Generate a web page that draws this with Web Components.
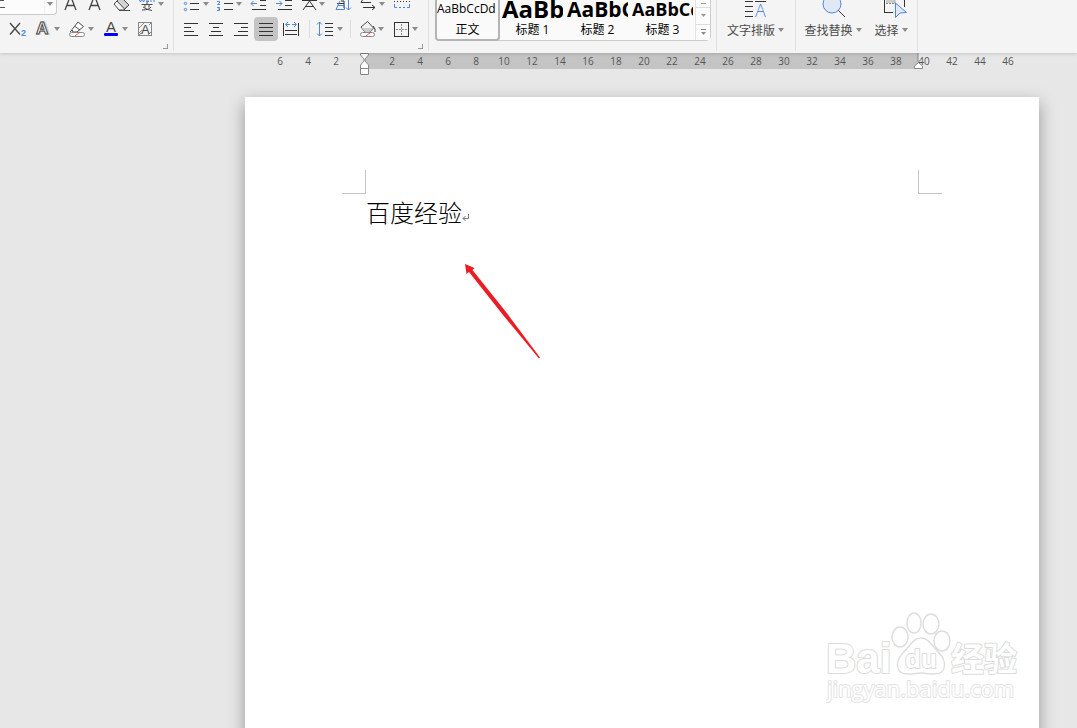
<!DOCTYPE html>
<html lang="zh-CN">
<head>
<meta charset="utf-8">
<title>文档编辑</title>
<style>
html, body { margin: 0; height: 100%; }
body { font-family: "Open Sans", "Noto Sans CJK SC", sans-serif; font-size: 12px; color: #4a4a4a; --page-left: 245px; --unit: 28px; }
</style>
</head>
<body>
<writer-app></writer-app>
<script>
const ICONS = {
  grow: [20, 17, '<path d="M4 10 9-3H10L15 10M6 5.500H13" fill="none" stroke="#444" stroke-width="1.300"/>'],
  shrink: [20, 17, '<path d="M4 10 9-3H10L15 10M6 5.500H13" fill="none" stroke="#444" stroke-width="1.300"/>'],
  eraser: [24, 17, '<path d="M5 4 12-3 20 5 15 10H10Z" fill="#f4f4f4" class="d"/><path d="M8 1 12-3 20 5 15.500 9Z" fill="#d2d2d2" class="d"/><path class="d" d="M10 10.500H21"/>'],
  wen: [20, 17, '<path d="M2-1 3.500 2 5-1 6.500 2 8-1M9 0H12M9 1.500H12M14 2V-1H17V2" fill="none" stroke="#4f86dc"/><path class="d" d="M10 2V5M4.500 4.500H15.500M8 5V7.500M12 5V7.500M5 10Q12 10 14 7M6 7Q10 10 15 10.500"/>'],
  subscript: [20, 24, '<path d="M3 6 13 17.500M13 6 3 17.500" fill="none" stroke="#444" stroke-width="1.300"/><text x="14" y="19" font-size="9" font-weight="600" fill="#4f86dc">2</text>'],
  effect: [20, 24, '<text x="4" y="17" font-size="17" font-weight="600" fill="#d8d8d8" stroke="#d8d8d8" stroke-width="2">A</text><text x="3" y="17" font-size="17" font-weight="600" fill="#fff" stroke="#444" stroke-width="1">A</text>'],
  highlight: [20, 24, '<path class="d" fill="#fff" d="M5 12.500 11 5 16.500 9.500 10 15H6ZM8 9.500 13 13M5 13 3 15"/><rect x="2.500" y="15.500" width="15" height="4" rx="2" fill="#fff" class="s"/><path d="M8 19 13 15" stroke="#e05050" fill="none"/>'],
  color: [20, 24, '<text class="a" x="5" y="15" font-size="15">A</text><rect x="3" y="16" width="14" height="3" rx="1" fill="#00f"/>'],
  shade: [20, 24, '<rect x="3.500" y="5.500" width="13" height="13" fill="#f4f4f4" class="s"/><path d="M4 11 9 6M4 16 7 13M13 18 16 15M14 8 16 6M4 18 6 16" stroke="#888" fill="none"/><text class="a" x="6" y="17" font-size="13">A</text>'],
  bullets: [20, 17, '<path class="k" d="M8 3.500H17M8 9.500H17"/><circle cx="3.500" cy="3.500" r="1.200" class="b"/><circle cx="3.500" cy="9.500" r="1.200" class="b"/>'],
  numbers: [20, 17, '<path class="k" d="M9 3.500H18M9 9.500H18"/><path class="b" d="M2 1.500H4.500V3L2.500 4.500H5M2 7.500H4.500V10.500H2M3 9H4.500"/>'],
  outdent: [20, 17, '<path class="k" d="M12 .5H18M12 5.500H18M4 9.500H18"/><path class="b" d="M3 3.500H9M5.500 1 3 3.500 5.500 6"/>'],
  indent: [20, 17, '<path class="k" d="M12 .5H19M12 5.500H19M5 9.500H19"/><path class="b" d="M3 3.500H9M6.500 1 9 3.500 6.500 6"/>'],
  scale: [20, 17, '<path class="k" d="M4 .5H19M11.500 1 5 10M11.500 1 18 10M8 6.500H15"/>'],
  sort: [22, 17, '<path class="k" d="M10 1H13V8M6 3.500H13"/><path class="b" d="M9 1 5 9.500H13.500V5.500H7M17.500-2V10M15 7.500 17.500 10 20 7.500"/>'],
  tabs: [20, 17, '<path class="k" d="M3 2.500H13M3 2.500 5-1M5 7.500H17M14 5 17 7.500 14 10"/>'],
  marks: [20, 17, '<path class="k" stroke-dasharray="1 2" d="M3 1.500H19"/><path class="b" d="M3.500 4V7.500H6M8 7.500H10M12 7.500H14M16 7.500H18.500V4"/>'],
  left: [24, 24, '<path class="k" d="M5 6.500H19M5 10.500H12M5 14.500H15M5 18.500H19"/>'],
  center: [24, 24, '<path class="k" d="M5 6.500H19M9 10.500H15M7 14.500H17M5 18.500H19"/>'],
  right: [24, 24, '<path class="k" d="M5 6.500H19M12 10.500H19M9 14.500H19M5 18.500H19"/>'],
  justify: [24, 24, '<path class="k" d="M5 6.500H19M5 10.500H19M5 14.500H19M5 18.500H19"/>'],
  distribute: [24, 24, '<path class="k" d="M4.500 6V19M19.500 6V19M6 13.500H18M6 17.500H18"/><path class="b" d="M7 7.500H11M9 5 6.500 7.500 9 10M13 7.500H17M15 5 17.500 7.500 15 10"/>'],
  spacing: [20, 24, '<path class="k" d="M9 6.500H17M9 10.500H17M9 14.500H17M9 18.500H17"/><path class="b" d="M3.500 5V19M1 7.500 3.500 5 6 7.500M1 16.500 3.500 19 6 16.500"/>'],
  bucket: [20, 24, '<path class="d" fill="#f4f4f4" d="M4 10 10.500 4.500 16.500 11 13 15H8Z"/><path d="M5 11H16L13 15H8Z" fill="#ccc"/><path class="k" d="M16 9 18 12V15"/><rect x="3.500" y="15.500" width="14" height="4" rx="2" fill="#fff" class="s"/><path d="M9 19 14 15" stroke="#e05050" fill="none"/>'],
  border: [20, 24, '<rect class="k" x="3.500" y="5.500" width="14" height="14"/><path d="M10.500 7V18M5 12.500H16" stroke="#888" fill="none" stroke-dasharray="2 1"/>'],
  layout: [32, 20, '<path class="k" d="M5 1.500H13M15 1.500H26M5 6.500H13M5 11.500H13M5 16.500H13"/><text x="15" y="17" font-size="18" font-weight="300" fill="#4f86dc">A</text>'],
  find: [32, 20, '<path class="k" d="M21 10 28 17"/><circle cx="15" cy="4" r="9" class="b" style="fill:#e1e8f5"/>'],
  select: [32, 20, '<path class="k" d="M8.500 0V13M8 12.500H17M28.500 0V7"/><path d="M10 0H19V3H10Z" fill="#ccc"/><path d="M10 3.500H19V0" fill="none" stroke="#888" stroke-dasharray="2 1"/><path class="b" style="fill:#e1e8f5" d="M19.500 3 30.500 12.500 24 13 19.500 17.500Z"/>']
};
const CARET = '<svg class="caret" width="8" height="4" viewBox="0 0 8 4" aria-hidden="true"><path d="M1 0H7L4 4Z" fill="#8c8c8c"/></svg>';
const ICON_CSS = `
  svg { display: block; flex: none; overflow: hidden; }
  .k { fill: none; stroke: #333; } .d { stroke: #4a4a4a; } .d:not([fill]) { fill: none; }
  .s { stroke: #888; } .b { fill: none; stroke: #4f86dc; } .a { fill: #4a4a4a; }`;
const drawIcon = n => { const [w, h, m] = ICONS[n]; return `<svg width="${w}" height="${h}" viewBox="0 0 ${w} ${h}" aria-hidden="true">${m}</svg>`; };

function define(name, render) {
  customElements.define(name, class extends HTMLElement {
    connectedCallback() {
      if (!this.shadowRoot) this.attachShadow({ mode: 'open' }).innerHTML = render(this);
    }
  });
}

define('tool-button', el => `<style>${ICON_CSS}
  :host { display: block; flex: none; }
  button { display: flex; align-items: center; padding: 0; border: 0; border-radius: 4px; background: none; }
  :host([pressed]) button { background: #c4c4c4; }
  :host([top]) .caret { align-self: flex-start; margin-top: 2px; }
</style><button type="button" aria-label="${el.getAttribute('label')}">${drawIcon(el.getAttribute('icon'))}${el.hasAttribute('caret') ? CARET : ''}</button>`);

define('large-button', el => `<style>${ICON_CSS}
  :host { display: block; flex: none; }
  button { display: flex; flex-direction: column; align-items: center; padding: 0; border: 0; background: none; font: inherit; color: #4a4a4a; }
  span { display: flex; align-items: center; gap: 2px; height: 20px; white-space: nowrap; }
</style><button type="button">${drawIcon(el.getAttribute('icon'))}<span><slot></slot>${CARET}</span></button>`);

define('ribbon-group', el => `<style>
  :host { display: flex; flex-direction: column; box-sizing: border-box; flex: none; height: 51px; border-right: 1px solid #e0e0e0; }
  ::slotted([slot=top]) { display: flex; height: 17px; }
  ::slotted([slot=main]) { display: flex; height: 24px; }
  button { display: block; width: 5px; height: 5px; margin: 3px 5px 0 auto; padding: 0; border: 0 solid #999; border-width: 0 1px 1px 0; background: none; }
</style><slot name="top"></slot><slot name="main"></slot><slot></slot>${el.hasAttribute('launcher') ? `<button type="button" aria-label="${el.getAttribute('launcher')}"></button>` : ''}`);

define('font-box', () => `<style>
  :host { display: grid; flex: none; width: 57px; height: 15px; }
  select, svg { grid-area: 1 / 1; }
  select { appearance: none; width: 57px; height: 15px; margin: 0; border: 1px solid #ccc; border-width: 0 1px 1px 0; border-radius: 0 0 4px 0; background: #fcfcfc; }
  svg { pointer-events: none; }
</style><select aria-label="字号"><option></option></select>
<svg width="57" height="15" viewBox="0 0 57 15"><path d="M0 .5H4M0 7.500H5" stroke="#555"/><path d="M44.500 0V14" stroke="#f0f0f0"/><path d="M47 2H53L50 6Z" fill="#8c8c8c"/></svg>`);

define('style-card', el => `<style>
  :host { display: block; flex: none; width: 65px; }
  button { display: flex; flex-direction: column; align-items: center; box-sizing: border-box; width: 65px; height: 41px; padding: 0 2px; border: 0; background: none; font: inherit; color: #000; overflow: hidden; }
  :host([selected]) button { border: 2px solid #b4b4b4; border-top: 0; border-radius: 0 0 4px 4px; padding: 0; }
  .preview { width: 100%; height: 21px; line-height: 18px; white-space: nowrap; overflow: hidden; text-align: left; font-size: var(--size, 12px); font-weight: var(--weight, 400); }
  .name { line-height: 18px; }
</style><button type="button"><span class="preview">${el.getAttribute('sample')}</span><span class="name"><slot></slot></span></button>`);

define('style-gallery', () => `<style>
  :host { display: flex; box-sizing: border-box; height: 41px; margin: 0 5px 0 6px; border: 1px solid #ccc; border-top: 0; border-left: 0; border-radius: 0 0 5px 5px; background: #fafafa; }
  .h1 { --size: 24px; --weight: 700; } .h2 { --size: 21px; --weight: 700; } .h3 { --size: 18px; --weight: 700; }
  nav { display: flex; flex-direction: column; width: 15px; border-left: 1px solid #e2e2e2; }
  button { display: grid; place-items: center; height: 17px; padding: 0; border: 0; border-bottom: 1px solid #ddd; background: #fcfcfc; }
  button:first-child { height: 8px; } button:last-child { height: 15px; border: 0; }
  svg { display: block; }
</style>
<style-card selected sample="AaBbCcDd">正文</style-card>
<style-card class="h1" sample="AaBb">标题 1</style-card>
<style-card class="h2" sample="AaBbC">标题 2</style-card>
<style-card class="h3" sample="AaBbCc">标题 3</style-card>
<nav><button type="button" aria-label="向上"><svg width="7" height="2"><path d="M1 .5H6" stroke="#999"/></svg></button>
<button type="button" aria-label="向下"><svg width="7" height="4"><path d="M1 0H6L3.500 3Z" fill="#999"/></svg></button>
<button type="button" aria-label="更多"><svg width="7" height="7"><path d="M1 .5H6" stroke="#888"/><path d="M1 3H6L3.500 6Z" fill="#888"/></svg></button></nav>`);

define('app-ribbon', () => `<style>
  :host { display: flex; flex: none; height: 53px; background: #f4f4f4; overflow: hidden; position: relative; z-index: 2; box-shadow: 0 1px 3px rgba(0,0,0,.15); }
  .font { width: 174px; } .para { width: 255px; } .styles { width: 288px; } .text { width: 79px; } .edit { width: 122px; }
  .font [slot=top] { gap: 4px; } .font [slot=main] { gap: 6px; padding-left: 7px; }
  .para [slot=top] { gap: 5px; padding-left: 8px; } .para [slot=main] { padding-left: 5px; }
  .row { display: flex; gap: 1px; } .wide { display: flex; gap: 6px; }
  i { width: 1px; height: 18px; margin: 3px 6px; background: #ddd; }
  .large { display: flex; justify-content: center; gap: 12px; }
</style>
<ribbon-group class="font" launcher="字体设置">
  <div slot="top"><font-box></font-box><tool-button icon="grow" label="增大字号"></tool-button><tool-button icon="shrink" label="减小字号"></tool-button><tool-button icon="eraser" label="清除格式"></tool-button><tool-button top caret icon="wen" label="拼音指南"></tool-button></div>
  <div slot="main"><tool-button icon="subscript" label="下标"></tool-button><tool-button caret icon="effect" label="文字效果"></tool-button><tool-button caret icon="highlight" label="突出显示"></tool-button><tool-button caret icon="color" label="字体颜色"></tool-button><tool-button icon="shade" label="字符底纹"></tool-button></div>
</ribbon-group>
<ribbon-group class="para" launcher="段落设置">
  <div slot="top"><tool-button top caret icon="bullets" label="项目符号"></tool-button><tool-button top caret icon="numbers" label="编号"></tool-button><tool-button icon="outdent" label="减少缩进量"></tool-button><tool-button icon="indent" label="增加缩进量"></tool-button><tool-button top caret icon="scale" label="中文版式"></tool-button><tool-button icon="sort" label="排序"></tool-button><tool-button top caret icon="tabs" label="制表位"></tool-button><tool-button icon="marks" label="标尺"></tool-button></div>
  <div slot="main"><div class="row"><tool-button icon="left" label="左对齐"></tool-button><tool-button icon="center" label="居中"></tool-button><tool-button icon="right" label="右对齐"></tool-button><tool-button pressed icon="justify" label="两端对齐"></tool-button><tool-button icon="distribute" label="分散对齐"></tool-button></div><i></i><tool-button caret icon="spacing" label="行距"></tool-button><i></i><div class="wide"><tool-button caret icon="bucket" label="底纹颜色"></tool-button><tool-button caret icon="border" label="边框"></tool-button></div></div>
</ribbon-group>
<ribbon-group class="styles"><style-gallery></style-gallery></ribbon-group>
<ribbon-group class="text"><div class="large"><large-button icon="layout">文字排版</large-button></div></ribbon-group>
<ribbon-group class="edit"><div class="large"><large-button icon="find">查找替换</large-button><large-button icon="select">选择</large-button></div></ribbon-group>`);

define('page-ruler', () => {
  let cells = '';
  for (let n = -6; n <= 46; n += 2) cells += n ? `<span>${Math.abs(n)}</span>` : '<span class="zero"></span>';
  return `<style>
  :host { display: flex; flex: none; position: relative; z-index: 1; height: 16px; padding-left: calc(var(--page-left) + 21px);
    background: linear-gradient(#c4c4c4, #c4c4c4) calc(var(--page-left) + 119px) 0 / 554px 16px no-repeat; }
  span { flex: none; width: var(--unit); line-height: 16px; text-align: center; font-size: 10px; color: #555; }
  svg { position: absolute; top: 0; overflow: visible; }
  .start { left: calc(var(--page-left) + 115px); } .end { left: calc(var(--page-left) + 669px); }
  </style>${cells}
  <svg class="start" width="9" height="22" viewBox="0 0 9 22" fill="#fff" stroke="#888"><path d="M.5.5H8.500V2L5 6V8L8.500 12V21.500H.5V12L4 8V6L.5 2Z"/><path d="M.5 15.500H8.500"/></svg>
  <svg class="end" width="9" height="16" viewBox="0 0 9 16" fill="#fff" stroke="#888"><path d="M4 0V9"/><path d="M4.500 9.500 8.500 13V15.500H.5V13Z"/></svg>`;
});

define('document-page', () => `<style>
  :host { display: block; box-sizing: border-box; flex: none; width: 794px; min-height: 1123px; margin: 28px 0 0 var(--page-left); padding: 73px 97px; background: #fff; box-shadow: 0 6px 16px rgba(0,0,0,.35); }
  .marks { display: flex; justify-content: space-between; }
  .marks span { box-sizing: border-box; width: 24px; height: 24px; border-bottom: 1px solid #c4c4c4; }
  .marks span:first-child { border-right: 1px solid #c4c4c4; } .marks span:last-child { border-left: 1px solid #c4c4c4; }
  .body { padding: 0 24px; }
</style><div class="marks"><span></span><span></span></div><div class="body"><slot></slot></div>`);

define('text-paragraph', () => `<style>
  :host { display: block; }
  p { display: flex; align-items: center; margin: 0; font: 300 24px/36px "Noto Sans CJK SC", sans-serif; color: #000; }
  svg { margin-top: 12px; }
</style><p><slot></slot><svg width="8" height="8" viewBox="0 0 8 8" fill="none" stroke="#777" aria-hidden="true"><path d="M6.500 0V4.500H1M3.500 2 1 4.500 3.500 7"/></svg></p>`);

define('pointer-arrow', () => `<style>
  :host { position: absolute; left: calc(var(--page-left) + 219px); top: 195px; pointer-events: none; }
  svg { display: block; }
</style><svg width="78" height="98" viewBox="0 0 78 98" aria-hidden="true"><path d="M1 0 10.500 4 8.500 6 42 48 76 93.500 75 94.500 39 51 5 8 2.500 10Z" fill="#ec1c24"/></svg>`);

define('site-watermark', () => `<style>
  :host { position: absolute; right: 51px; bottom: 19px; pointer-events: none; }
  svg { display: block; }
  text { fill: #fff; stroke: #dcdcdc; stroke-width: 2px; paint-order: stroke; stroke-linejoin: round; font-family: "Open Sans", "Noto Sans CJK SC", sans-serif; }
  .paw { fill: #fff; stroke: #dedede; stroke-width: 1.5px; }
</style><svg width="200" height="98" viewBox="0 0 200 98">
  <text x="0" y="62" font-size="42" font-weight="700" style="font-family:'Liberation Sans',sans-serif">Bai</text>
  <g class="paw"><ellipse cx="74" cy="26" rx="8" ry="10"/><ellipse cx="88" cy="12" rx="7" ry="10"/><ellipse cx="105" cy="13" rx="8" ry="10"/><ellipse cx="116" cy="30" rx="8" ry="10"/>
  <path d="M95 27C103 27 106 35 113 42C121 50 121 63 108 63C102 63 99 62 95 62C91 62 88 63 82 63C69 63 69 50 77 42C84 35 87 27 95 27Z"/></g>
  <text x="79" y="57" font-size="26" font-weight="700" style="font-family:'Liberation Sans',sans-serif">du</text>
  <text x="125" y="60" font-size="33" font-weight="700">经验</text>
  <text x="1" y="86" font-size="22" font-weight="500" style="stroke:#e4e4e4">jingyan.baidu.com</text>
</svg>`);

define('writer-app', () => `<style>
  :host { display: flex; flex-direction: column; height: 100vh; overflow: hidden; background: #e7e7e7; }
  main { position: relative; flex: 1; min-height: 0; overflow: hidden; }
</style>
<app-ribbon></app-ribbon><page-ruler></page-ruler>
<main><document-page><text-paragraph>百度经验</text-paragraph></document-page><pointer-arrow></pointer-arrow><site-watermark></site-watermark></main>`);
</script>
</body>
</html>
